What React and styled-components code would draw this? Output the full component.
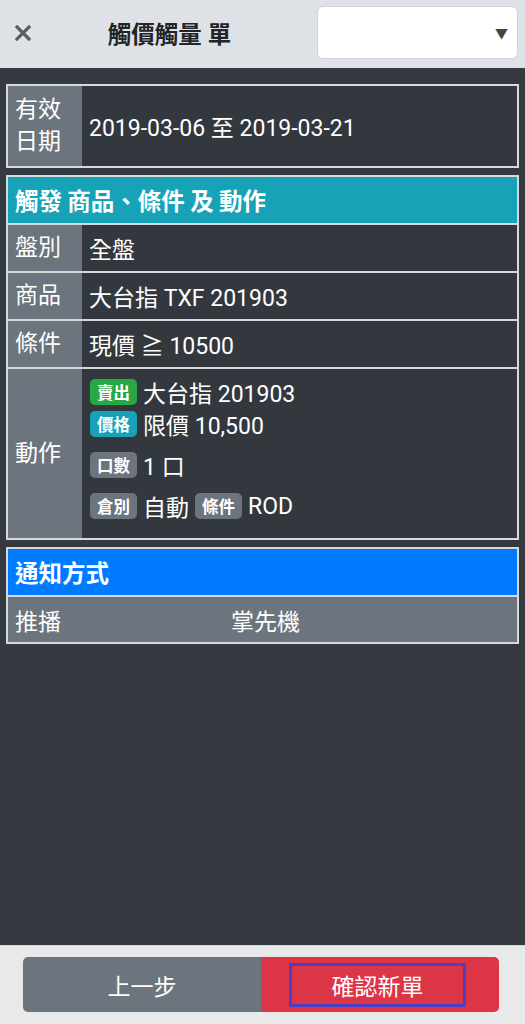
import React from 'react'
import styled, { createGlobalStyle } from 'styled-components'

const GlobalStyle = createGlobalStyle`
  html, body {
    margin: 0;
    padding: 0;
    background: #343a40;
    font-family: Roboto, "Noto Sans CJK TC", sans-serif;
  }
  * { box-sizing: border-box; }
`

const Page = styled.div`
  display: flex;
  flex-direction: column;
  height: 1024px;
  color: #fff;
`

const Header = styled.header`
  display: flex;
  align-items: center;
  height: 68px;
  background: #dee2e6;
  padding: 0 7px 3px 0;
`

const CloseBtn = styled.button`
  width: 42px;
  height: 40px;
  border: none;
  background: none;
  padding: 0 0 0 4px;
  display: flex;
  align-items: center;
  justify-content: center;
  cursor: pointer;
`

const Title = styled.h1`
  flex: 1;
  margin: 0;
  padding-right: 20px;
  text-align: center;
  font-size: 23.5px;
  font-weight: 700;
  color: #212529;
`

const SelectBox = styled.div`
  width: 201px;
  height: 53px;
  background: #fff;
  border: 1px solid #ced4da;
  border-radius: 6px;
  display: flex;
  align-items: center;
  justify-content: flex-end;
  padding-right: 9px;
  color: #444;
  font-size: 13px;
`

const Content = styled.main`
  flex: 1;
  padding: 16px 6px 0;
  display: flex;
  flex-direction: column;
  gap: 7px;
`

const Table = styled.section`
  border: 2px solid #d6d9dc;
  display: flex;
  flex-direction: column;
`

const SectionHead = styled.div`
  height: 46px;
  display: flex;
  align-items: center;
  padding: 0 7px;
  background: ${p => p.$color};
  font-size: 23.5px;
  font-weight: 700;
  font-family: "Noto Sans CJK TC", sans-serif;
`

const Row = styled.div`
  display: grid;
  grid-template-columns: ${p => p.$cols || '74px 1fr'};
  min-height: ${p => p.$h || 48}px;
  border-top: ${p => (p.$first ? 'none' : '2px solid #d6d9dc')};
  background: ${p => (p.$grey ? '#6c757d' : 'transparent')};
  font-size: 23px;
`

const Label = styled.div`
  background: #6c757d;
  display: flex;
  align-items: center;
  padding: 0 7px;
  line-height: 32px;
`

const Value = styled.div`
  display: flex;
  align-items: center;
  padding: 0 7px;
  background: ${p => (p.$grey ? '#6c757d' : '#32383e')};
`

const Actions = styled.div`
  background: #32383e;
  padding: 7px 8px 16px;
  display: flex;
  flex-direction: column;
`

const ActionLine = styled.div`
  display: flex;
  align-items: center;
  gap: 6px;
  height: 32px;
  margin-top: ${p => p.$space || 0}px;
`

const Badge = styled.span`
  display: inline-flex;
  align-items: center;
  justify-content: center;
  height: 26px;
  padding: 0 7px;
  border-radius: 5px;
  font-size: 16.5px;
  font-weight: 700;
  background: ${p => p.$bg || '#6c757d'};
  font-family: "Noto Sans CJK TC", sans-serif;
`

const Footer = styled.footer`
  height: 79px;
  background: #e9e9e9;
  border-top: 1px solid #d0d3d6;
  padding: 11px 26px 12px 23px;
`

const BtnGroup = styled.div`
  display: flex;
  height: 55px;
  border-radius: 5px;
  overflow: hidden;
`

const Btn = styled.button`
  flex: 1;
  border: none;
  color: #fff;
  font-size: 23px;
  font-family: "Noto Sans CJK TC", sans-serif;
  background: ${p => p.$bg};
  display: flex;
  align-items: center;
  justify-content: center;
  padding: 0;
`

const Focus = styled.span`
  display: flex;
  align-items: center;
  justify-content: center;
  width: 177px;
  height: 44px;
  margin-right: 5px;
  border: 3px solid #4a40c8;
`

const CloseIcon = () => (
  <svg width="16" height="16" viewBox="0 0 16 16">
    <path d="M2 2 L14 14 M14 2 L2 14" stroke="#5a5f64" strokeWidth="3.2" strokeLinecap="square" />
  </svg>
)

export default function App() {
  return (
    <Page>
      <GlobalStyle />
      <Header>
        <CloseBtn><CloseIcon /></CloseBtn>
        <Title>觸價觸量 單</Title>
        <SelectBox>▼</SelectBox>
      </Header>

      <Content>
        <Table>
          <Row $first $h={80}>
            <Label>有效<br />日期</Label>
            <Value>2019-03-06 至 2019-03-21</Value>
          </Row>
        </Table>

        <Table>
          <SectionHead $color="#17a2b8">觸發 商品、條件 及 動作</SectionHead>
          <Row><Label>盤別</Label><Value>全盤</Value></Row>
          <Row><Label>商品</Label><Value>大台指 TXF 201903</Value></Row>
          <Row><Label>條件</Label><Value>現價 ≧ 10500</Value></Row>
          <Row>
            <Label>動作</Label>
            <Actions>
              <ActionLine><Badge $bg="#28a745">賣出</Badge>大台指 201903</ActionLine>
              <ActionLine><Badge $bg="#17a2b8">價格</Badge>限價 10,500</ActionLine>
              <ActionLine $space={9}><Badge>口數</Badge>1 口</ActionLine>
              <ActionLine $space={9}>
                <Badge>倉別</Badge>自動<Badge>條件</Badge>ROD
              </ActionLine>
            </Actions>
          </Row>
        </Table>

        <Table>
          <SectionHead $color="#007bff">通知方式</SectionHead>
          <Row $grey $cols="216px 1fr" $h={47}>
            <Value $grey>推播</Value>
            <Value $grey>掌先機</Value>
          </Row>
        </Table>
      </Content>

      <Footer>
        <BtnGroup>
          <Btn $bg="#6c757d">上一步</Btn>
          <Btn $bg="#dc3545"><Focus>確認新單</Focus></Btn>
        </BtnGroup>
      </Footer>
    </Page>
  )
}
